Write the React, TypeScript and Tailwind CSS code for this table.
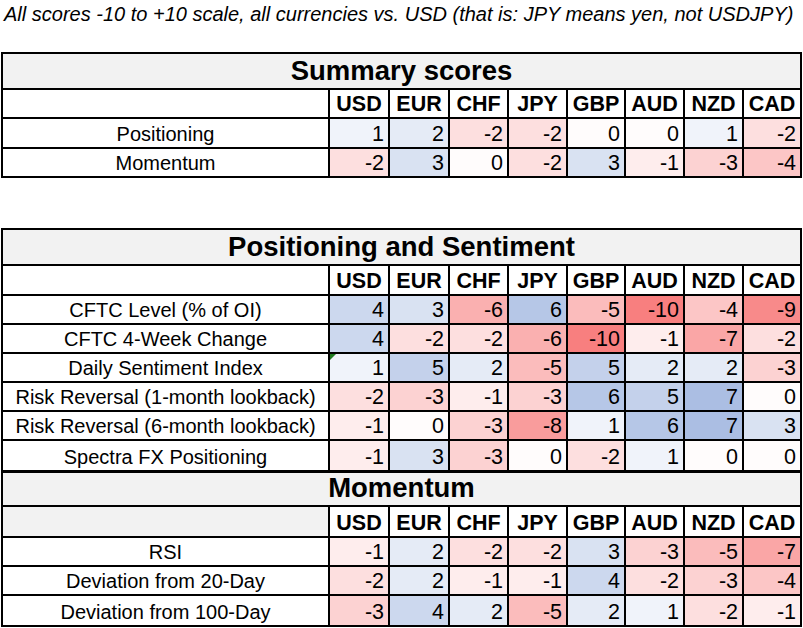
import React from "react";

const CUR = ["USD", "EUR", "CHF", "JPY", "GBP", "AUD", "NZD", "CAD"];
const GRID = "grid grid-cols-[327px_60px_60px_59px_59px_58px_59px_59px_1fr]";

const BG: Record<number, string> = {
  [-10]: "bg-[#f87f7f]",
  [-9]: "bg-[#f88a8a]",
  [-8]: "bg-[#f99c9c]",
  [-7]: "bg-[#faa6a6]",
  [-6]: "bg-[#fab0b0]",
  [-5]: "bg-[#fbbcbc]",
  [-4]: "bg-[#fcc6c6]",
  [-3]: "bg-[#fcd2d2]",
  [-2]: "bg-[#fddfdf]",
  [-1]: "bg-[#feeded]",
  0: "bg-[#fffcfc]",
  1: "bg-[#f0f3fa]",
  2: "bg-[#e5ebf6]",
  3: "bg-[#d9e2f2]",
  4: "bg-[#ccd8ee]",
  5: "bg-[#c4d1eb]",
  6: "bg-[#b6c7e7]",
  7: "bg-[#abbee3]",
};

type Row = { label: string; values: number[]; flag?: boolean };

function TitleRow({ title, cls }: { title: string; cls: string }) {
  return (
    <div className={`${cls} border-b-2 border-black bg-[#f2f2f2] flex items-end justify-center pb-[2px]`}>
      <span className="font-bold text-[27.5px] leading-[31px] text-black">{title}</span>
    </div>
  );
}

function HeaderRow({ cls, labelBg }: { cls: string; labelBg: string }) {
  return (
    <div className={`${GRID} ${cls} border-b-2 border-black`}>
      <div className={`border-r-2 border-black ${labelBg}`} />
      {CUR.map((c, i) => (
        <div
          key={c}
          className={`flex items-end justify-center pb-[1px] bg-white ${i < CUR.length - 1 ? "border-r-2 border-black" : ""}`}
        >
          <span className="font-bold text-[21.5px] leading-[24px] text-black">{c}</span>
        </div>
      ))}
    </div>
  );
}

function DataRow({ row, cls }: { row: Row; cls: string }) {
  return (
    <div className={`${GRID} ${cls}`}>
      <div className="border-r-2 border-black bg-white flex items-end justify-center pb-[2px]">
        <span className="text-[20px] leading-[22px] text-black">{row.label}</span>
      </div>
      {row.values.map((v, i) => (
        <div
          key={i}
          className={`relative flex items-end justify-end pr-[4px] pb-[1px] ${BG[v]} ${i < row.values.length - 1 ? "border-r-2 border-black" : ""}`}
        >
          {row.flag && i === 0 && (
            <svg className="absolute left-0 top-0" width="6" height="6" viewBox="0 0 6 6">
              <polygon points="0,0 6,0 0,6" fill="#1f7a1f" />
            </svg>
          )}
          <span className="text-[21.5px] leading-[24px] text-black">{v}</span>
        </div>
      ))}
    </div>
  );
}

const summary: Row[] = [
  { label: "Positioning", values: [1, 2, -2, -2, 0, 0, 1, -2] },
  { label: "Momentum", values: [-2, 3, 0, -2, 3, -1, -3, -4] },
];

const positioning: Row[] = [
  { label: "CFTC Level (% of OI)", values: [4, 3, -6, 6, -5, -10, -4, -9] },
  { label: "CFTC 4-Week Change", values: [4, -2, -2, -6, -10, -1, -7, -2] },
  { label: "Daily Sentiment Index", values: [1, 5, 2, -5, 5, 2, 2, -3], flag: true },
  { label: "Risk Reversal (1-month lookback)", values: [-2, -3, -1, -3, 6, 5, 7, 0] },
  { label: "Risk Reversal (6-month lookback)", values: [-1, 0, -3, -8, 1, 6, 7, 3] },
  { label: "Spectra FX Positioning", values: [-1, 3, -3, 0, -2, 1, 0, 0] },
];

const momentum: Row[] = [
  { label: "RSI", values: [-1, 2, -2, -2, 3, -3, -5, -7] },
  { label: "Deviation from 20-Day", values: [-2, 2, -1, -1, 4, -2, -3, -4] },
  { label: "Deviation from 100-Day", values: [-3, 4, 2, -5, 2, 1, -2, -1] },
];

export default function App() {
  return (
    <div className="w-[803px] h-[628px] bg-white overflow-hidden font-['Liberation_Sans',Arial,sans-serif] text-black">
      <p className="italic text-[20px] leading-[28px] pl-[4px] whitespace-nowrap">
        All scores -10 to +10 scale, all currencies vs. USD (that is: JPY means yen, not USDJPY)
      </p>

      <div className="mt-[24px] ml-[1px] w-[801px] border-2 border-black">
        <TitleRow title="Summary scores" cls="h-[36px]" />
        <HeaderRow cls="h-[29px]" labelBg="bg-white" />
        <DataRow row={summary[0]} cls="h-[30px] border-b-2 border-black" />
        <DataRow row={summary[1]} cls="h-[27px]" />
      </div>

      <div className="mt-[50px] ml-[1px] w-[801px] border-2 border-black">
        <TitleRow title="Positioning and Sentiment" cls="h-[36px]" />
        <HeaderRow cls="h-[30px]" labelBg="bg-white" />
        {positioning.map((r, i) => (
          <DataRow
            key={r.label}
            row={r}
            cls={i === positioning.length - 1 ? "h-[32px] border-b-[3px] border-black" : "h-[29px] border-b-2 border-black"}
          />
        ))}
        <TitleRow title="Momentum" cls="h-[34px]" />
        <HeaderRow cls="h-[31px]" labelBg="bg-[#f2f2f2]" />
        {momentum.map((r, i) => (
          <DataRow
            key={r.label}
            row={r}
            cls={i === momentum.length - 1 ? "h-[29px]" : "h-[29px] border-b-2 border-black"}
          />
        ))}
      </div>
    </div>
  );
}
